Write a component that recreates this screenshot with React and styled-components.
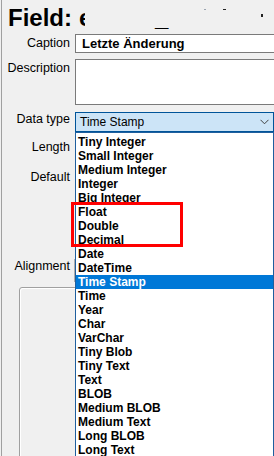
import React from "react";
import styled, { createGlobalStyle } from "styled-components";

const Global = createGlobalStyle`
  html, body {
    margin: 0;
    padding: 0;
    background: #f0f0f0;
    overflow: hidden;
  }
  body {
    font-family: "Liberation Sans", Arial, sans-serif;
    font-size: 12px;
    color: #000;
  }
`;

const Window = styled.div`
  position: relative;
  margin-left: 1px;
  border-left: 1px solid #a0a0a0;
  height: 456px;
  overflow: hidden;
  box-sizing: border-box;
`;

const Title = styled.div`
  display: flex;
  align-items: flex-start;
  height: 30px;
  padding: 3px 0 0 6px;
  font-size: 24px;
  line-height: 30px;
  font-weight: 700;
  white-space: nowrap;
`;

// the title value is blanked out in the picture, only a sliver of it shows
const Clip = styled.span`
  display: inline-block;
  width: 6px;
  margin-left: 7px;
  overflow: hidden;
`;

const Under = styled.span`
  margin-left: 70px;
`;

const Speck = styled.span`
  display: inline-block;
  width: ${(p) => p.w}px;
  height: ${(p) => p.h}px;
  margin-left: ${(p) => p.left}px;
  margin-top: ${(p) => p.top}px;
  background: ${(p) => p.color};
`;

const Row = styled.div`
  display: flex;
  align-items: flex-start;
  gap: 5px;
  margin-top: ${(p) => p.top}px;
`;

const Label = styled.div`
  width: 68px;
  flex: none;
  text-align: right;
  font-size: 12.5px;
  line-height: 14px;
  padding-top: ${(p) => p.pad || 0}px;
  white-space: nowrap;
`;

const TextBox = styled.div`
  box-sizing: border-box;
  width: 220px;
  flex: none;
  height: ${(p) => p.h}px;
  background: #fff;
  border: 1px solid #7a7a7a;
  padding-left: 6px;
  font-size: 13px;
  font-weight: ${(p) => (p.bold ? 700 : 400)};
  line-height: ${(p) => p.h - 2}px;
`;

const ComboWrap = styled.div`
  position: relative;
  flex: none;
  width: 199px;
`;

const Combo = styled.div`
  box-sizing: border-box;
  height: 20px;
  display: flex;
  align-items: center;
  justify-content: space-between;
  padding: 0 4px 0 4px;
  background: #cce4f7;
  border: 1px solid #005499;
  font-size: 12px;
`;

const DropList = styled.ul`
  position: absolute;
  left: 0;
  top: 100%;
  z-index: 5;
  box-sizing: border-box;
  width: 199px;
  margin: 0;
  padding: 2px 0 0;
  list-style: none;
  background: #fff;
  border: 1px solid #1f5f9e;
`;

const Item = styled.li`
  height: 14px;
  padding-left: 2px;
  line-height: 14px;
  font-weight: 700;
  white-space: nowrap;
  background: ${(p) => (p.active ? "#0078d7" : "transparent")};
  color: ${(p) => (p.active ? "#fff" : "#000")};
`;

const PlainBox = styled.div`
  box-sizing: border-box;
  flex: none;
  width: 199px;
  height: ${(p) => p.h}px;
  margin-left: ${(p) => p.shift || 0}px;
  background: ${(p) => p.bg};
  border: 1px solid #adadad;
`;

const GroupBox = styled.div`
  margin: 5px 0 0 17px;
  height: 200px;
  width: 300px;
  border: 1px solid #a0a0a0;
  border-radius: 3px 0 0 0;
  box-shadow: inset 1px 1px 0 #fff;
`;

const Mark = styled.div`
  position: absolute;
  left: 69px;
  top: 202px;
  width: 112px;
  height: 45px;
  box-sizing: border-box;
  border: 3px solid #ff0000;
  z-index: 10;
`;

const Chevron = () => (
  <svg width="9" height="6" viewBox="0 0 9 6">
    <path d="M0.5 0.8 L4.5 4.8 L8.5 0.8" fill="none" stroke="#404040" strokeWidth="1" />
  </svg>
);

const types = [
  "Tiny Integer",
  "Small Integer",
  "Medium Integer",
  "Integer",
  "Big Integer",
  "Float",
  "Double",
  "Decimal",
  "Date",
  "DateTime",
  "Time Stamp",
  "Time",
  "Year",
  "Char",
  "VarChar",
  "Tiny Blob",
  "Tiny Text",
  "Text",
  "BLOB",
  "Medium BLOB",
  "Medium Text",
  "Long BLOB",
  "Long Text",
];

const App = () => {
  const selected = "Time Stamp";
  return (
    <>
      <Global />
      <Window>
        <Title>
          Field:
          <Clip>e</Clip>
          <Under>_</Under>
          <Speck w={2} h={1} left={36} top={6} color="#9aa4b0" />
          <Speck w={3} h={1} left={17} top={6} color="#222" />
          <Speck w={2} h={3} left={35} top={11} color="#222" />
        </Title>

        <Row top={1}>
          <Label pad={2}>Caption</Label>
          <TextBox h={19} bold>
            Letzte Änderung
          </TextBox>
        </Row>

        <Row top={6}>
          <Label pad={2}>Description</Label>
          <TextBox h={46} />
        </Row>

        <Row top={7}>
          <Label>Data type</Label>
          <ComboWrap>
            <Combo>
              <span>{selected}</span>
              <Chevron />
            </Combo>
            <DropList>
              {types.map((t) => (
                <Item key={t} active={t === selected}>
                  {t}
                </Item>
              ))}
            </DropList>
          </ComboWrap>
        </Row>

        <Row top={8}>
          <Label>Length</Label>
          <PlainBox h={20} bg="#fff" />
        </Row>

        <Row top={10}>
          <Label>Default</Label>
          <PlainBox h={20} bg="#fff" />
        </Row>

        <Row top={69}>
          <Label>Alignment</Label>
          <PlainBox h={23} bg="#e1e1e1" shift={-1} />
        </Row>

        <GroupBox />
        <Mark />
      </Window>
    </>
  );
};

export default App;
